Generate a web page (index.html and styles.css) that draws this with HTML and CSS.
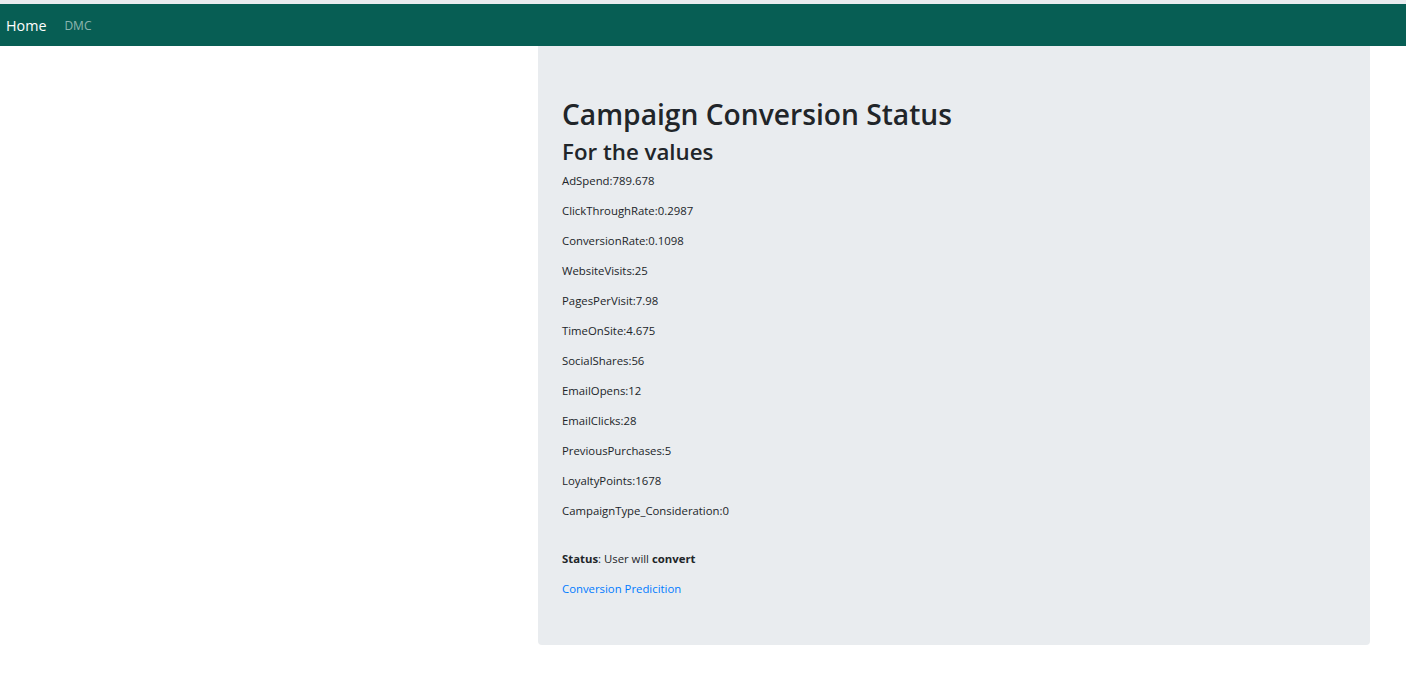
FILE: index.html
```html
<!DOCTYPE html>
<html lang="en">
<head>
<meta charset="utf-8">
<title>Campaign Conversion Status</title>
<link rel="stylesheet" href="styles.css">
</head>
<body>
<div class="topline"></div>
<nav class="navbar">
  <a class="brand" href="#">Home</a>
  <a class="nav-link" href="#">DMC</a>
</nav>
<main class="main">
  <section class="jumbotron">
    <h1 class="title">Campaign Conversion Status</h1>
    <h2 class="subtitle">For the values</h2>
    <p class="val">AdSpend:789.678</p>
    <p class="val">ClickThroughRate:0.2987</p>
    <p class="val">ConversionRate:0.1098</p>
    <p class="val">WebsiteVisits:25</p>
    <p class="val">PagesPerVisit:7.98</p>
    <p class="val">TimeOnSite:4.675</p>
    <p class="val">SocialShares:56</p>
    <p class="val">EmailOpens:12</p>
    <p class="val">EmailClicks:28</p>
    <p class="val">PreviousPurchases:5</p>
    <p class="val">LoyaltyPoints:1678</p>
    <p class="val">CampaignType_Consideration:0</p>
    <p class="status"><b>Status</b>: User will <b>convert</b></p>
    <a class="link" href="#">Conversion Predicition</a>
  </section>
</main>
</body>
</html>
```
FILE: styles.css
```css
* { box-sizing: border-box; }
html, body { margin: 0; padding: 0; }
body {
  font-family: "Open Sans", "Noto Sans", sans-serif;
  color: #212529;
  background: #fff;
}
.topline { height: 4px; background: #e9ecef; }
.navbar {
  height: 42px;
  background: #075e54;
  display: flex;
  align-items: center;
  padding: 0 6px;
  gap: 18px;
}
.brand {
  color: #fff;
  text-decoration: none;
  font-size: 14.3px;
}
.nav-link {
  color: rgba(255,255,255,0.55);
  text-decoration: none;
  font-size: 12px;
}
.main {
  padding-left: 538px;
}
.jumbotron {
  width: 832px;
  background: #e9ecef;
  border-radius: 0 0 4px 4px;
  padding: 48px 24px 38px;
  min-height: 599px;
}
.title {
  margin: 0 0 2px;
  font-size: 28.2px;
  font-weight: 600;
  line-height: 40px;
}
.subtitle {
  margin: 0 0 4px;
  font-size: 22.3px;
  font-weight: 600;
  line-height: 32px;
}
.val {
  margin: 0 0 12px;
  font-size: 11.35px;
  line-height: 18px;
}
.status {
  margin: 30px 0 12px;
  font-size: 11.35px;
  line-height: 18px;
}
.link {
  display: block;
  font-size: 11.35px;
  line-height: 18px;
  color: #007bff;
  text-decoration: none;
}
```
